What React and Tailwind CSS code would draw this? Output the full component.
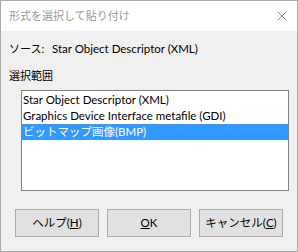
const font = { fontFamily: 'Lato, "Noto Sans CJK JP", sans-serif' };

function ListItem({ label, selected }) {
  return (
    <div
      className={`h-4 pl-[1px] text-[11.5px] leading-4 whitespace-nowrap ${
        selected ? "bg-[#3399ff] text-white" : "text-black"
      }`}
    >
      {label}
    </div>
  );
}

function DialogButton({ children }) {
  return (
    <button
      type="button"
      className="h-[28px] w-[84px] border border-[#adadad] bg-[#e1e1e1] text-[11.5px] text-black"
    >
      {children}
    </button>
  );
}

export default function App() {
  const items = [
    "Star Object Descriptor (XML)",
    "Graphics Device Interface metafile (GDI)",
    "ビットマップ画像(BMP)",
  ];

  return (
    <div
      className="flex h-[252px] w-[298px] flex-col border border-[#aaaaaa] bg-[#f0f0f0]"
      style={font}
    >
      <div className="flex h-[30px] items-center justify-between bg-white pl-[8px] pr-[10px]">
        <span className="text-[11px] text-[#999999]">形式を選択して貼り付け</span>
        <svg width="10" height="10" viewBox="0 0 10 10">
          <path d="M0.5 0.5 L9.5 9.5 M9.5 0.5 L0.5 9.5" stroke="#8a8a8a" strokeWidth="1" />
        </svg>
      </div>

      <div className="flex flex-1 flex-col pl-[8px] pt-[10px]">
        <div className="flex h-4 items-center leading-4 text-black">
          <span className="w-[43px] text-[11px]">ソース:</span>
          <span className="text-[11.5px]">Star Object Descriptor (XML)</span>
        </div>
        <div className="mt-[11px] h-4 text-[11px] leading-4 text-black">選択範囲</div>
        <div className="ml-[12px] mt-[6px] h-[101px] w-[268px] border border-[#828282] bg-white pt-[1px]">
          {items.map((label, i) => (
            <ListItem key={label} label={label} selected={i === 2} />
          ))}
        </div>
        <div className="mt-[18px] flex gap-[8px] pl-[6px]">
          <DialogButton>
            ヘルプ(<span className="underline">H</span>)
          </DialogButton>
          <DialogButton>
            <span className="underline">O</span>K
          </DialogButton>
          <DialogButton>
            キャンセル(<span className="underline">C</span>)
          </DialogButton>
        </div>
      </div>
    </div>
  );
}
